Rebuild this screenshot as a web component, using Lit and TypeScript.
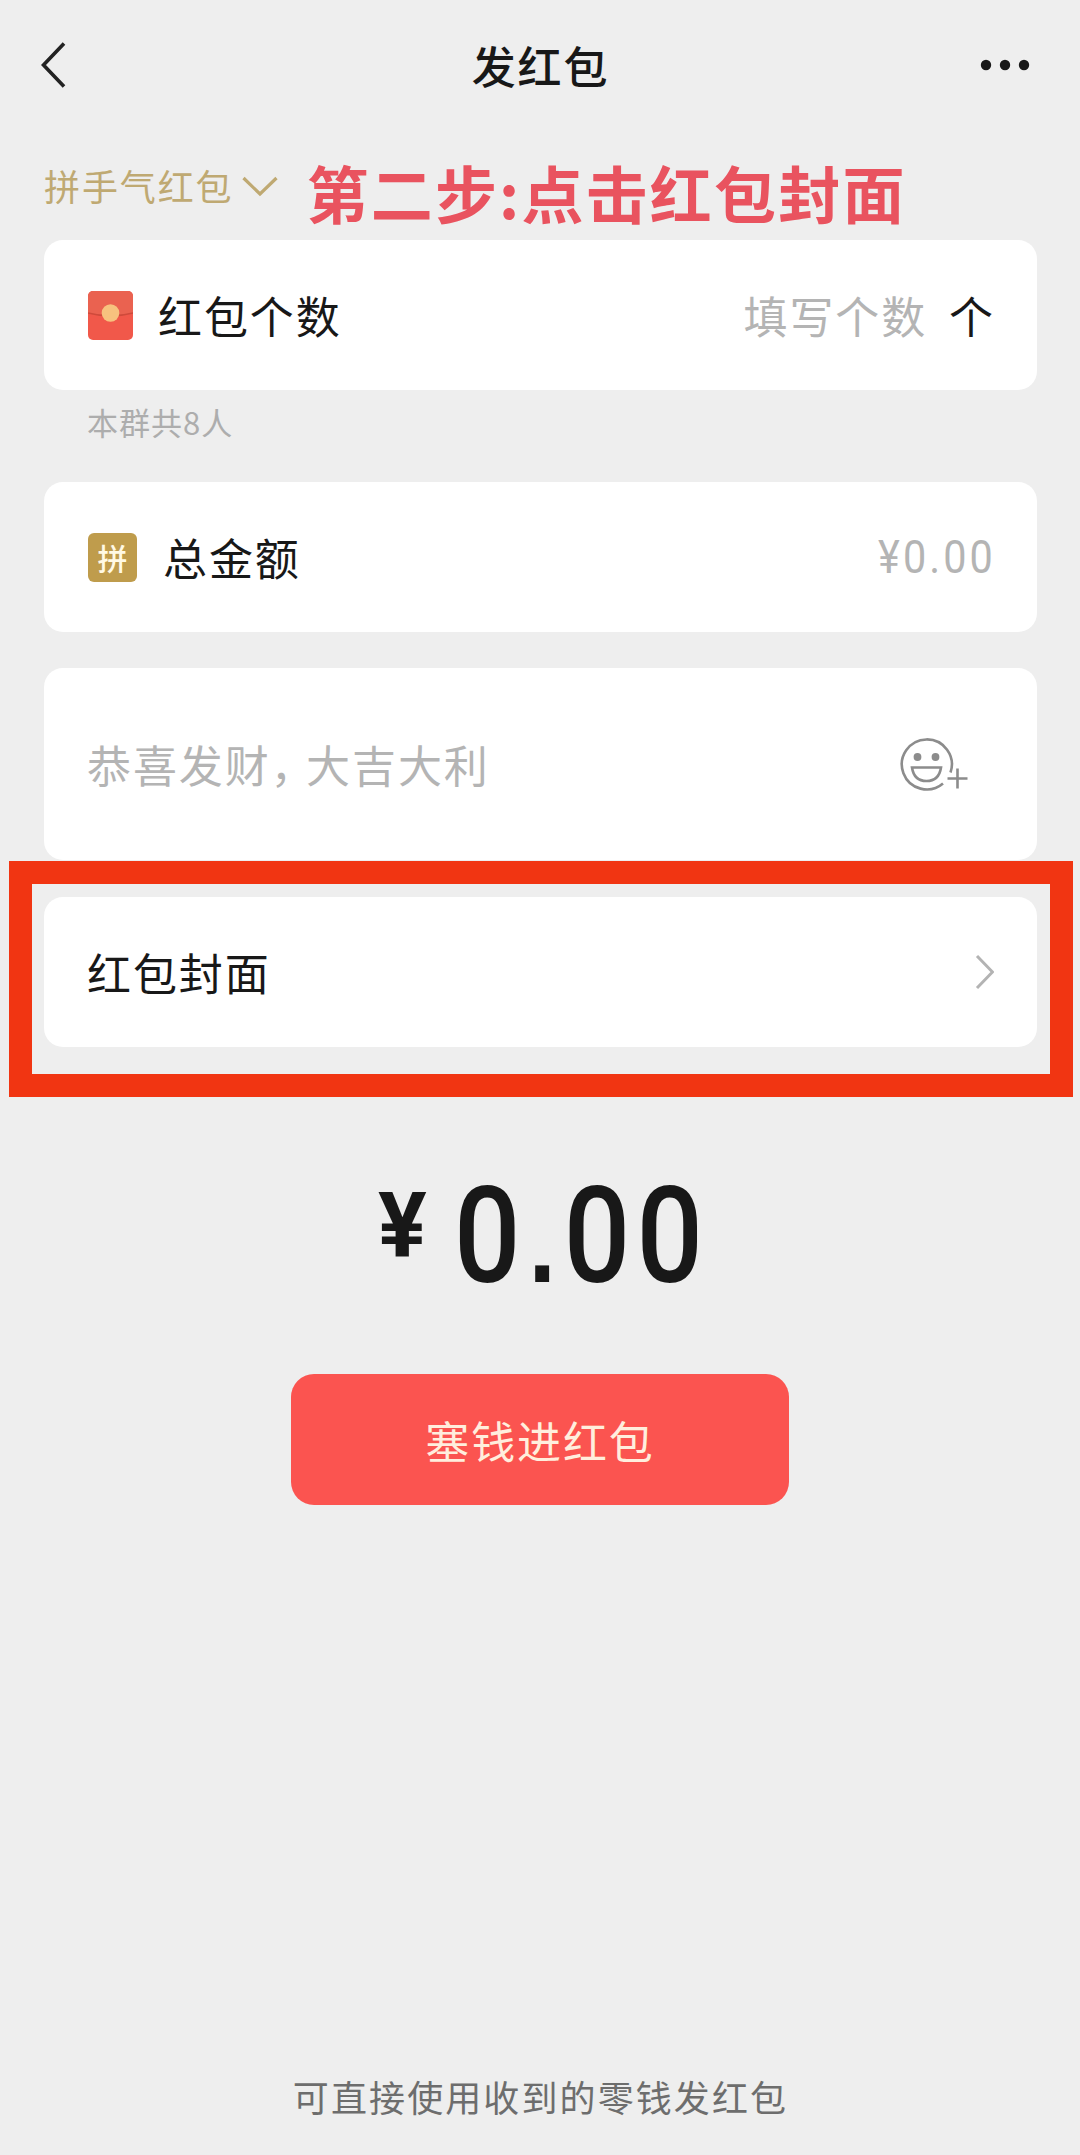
import { LitElement, html, css } from "lit";
import { customElement } from "lit/decorators.js";

@customElement("app-root")
export class AppRoot extends LitElement {
  static styles = css`
    :host {
      display: block;
      font-family: "Noto Sans CJK SC", "Noto Sans", sans-serif;
      color: #181818;
    }
    * { box-sizing: border-box; }
    svg { display: block; flex: none; }
    .page {
      position: relative;
      display: flex;
      flex-direction: column;
      width: 1080px;
      height: 2155px;
      padding: 0 43px 0 44px;
      background: #eeeeee;
      font-size: 44px;
      letter-spacing: 1.9px;
      line-height: 60px;
      white-space: nowrap;
      overflow: hidden;
    }
    .header {
      display: grid;
      grid-template-columns: 1fr auto 1fr;
      align-items: center;
      height: 130px;
      margin: 0 5px 0 -5px;
    }
    .title { font-weight: 500; margin: 0; padding: 0 0 1px 10px; font-size: 44px; }
    .more { justify-self: end; }
    .mode {
      display: flex;
      height: 110px;
      color: #bfa972;
      font-size: 36px;
    }
    .mode-name { padding-top: 25px; }
    .mode-arrow { margin: 45px 0 0 8px; }
    .step {
      margin-left: 29px;
      padding-top: 17px;
      font-size: 62px;
      letter-spacing: 2.2px;
      line-height: 90px;
      font-weight: 700;
      color: #e9535f;
    }
    .card {
      display: flex;
      align-items: center;
      height: 150px;
      flex: none;
      padding: 0 43px 0 44px;
      border-radius: 19px;
      background: #fff;
    }
    .hint { color: #b4b4b4; }
    .push { margin-left: auto; }
    .count { margin-left: 22px; margin-right: -1px; }
    .envelope + .label { margin-left: 25px; }
    .members {
      height: 92px;
      padding: 1px 0 0 43px;
      font-size: 31px;
      letter-spacing: 1px;
      line-height: 62px;
      color: #adadad;
    }
    .tag {
      display: grid;
      place-items: center;
      width: 49px;
      height: 49px;
      margin-right: 26px;
      border-radius: 6px;
      background: #bf9c4c;
      color: #fff9e4;
      font-size: 30px;
      font-weight: 500;
      letter-spacing: 0;
      line-height: 42px;
    }
    .money {
      font-family: Roboto, sans-serif;
      font-weight: 400;
      font-size: 46px;
      letter-spacing: 3.4px;
      color: #b4b4b4;
      margin-right: -2px;
      transform: scaleX(0.9);
      transform-origin: right;
    }
    .wish { height: 192px; margin-top: 36px; padding-left: 43px; }
    .comma { font-feature-settings: "halt" 1; letter-spacing: 13.500px; }
    .emoji { margin-right: 21px; }
    .cover { margin-top: 37px; padding-left: 43px; }
    .highlight {
      position: absolute;
      left: 9px;
      top: 861px;
      width: 1064px;
      height: 236px;
      border: 23px solid #f13512;
    }
    .total {
      display: flex;
      align-items: flex-start;
      height: 327px;
      padding: 123px 0 0 334px;
      font-family: Roboto, sans-serif;
      font-weight: 500;
      letter-spacing: 0;
    }
    .yen {
      width: 76px;
      padding-top: 10px;
      font-size: 91px;
      line-height: 92px;
      font-weight: 700;
    }
    .sum {
      font-size: 133px;
      line-height: 134px;
      letter-spacing: 7px;
      transform: scaleX(0.88);
      transform-origin: left;
    }
    .point {
      font-family: "Liberation Sans", sans-serif;
      font-weight: 700;
      font-size: 112px;
      line-height: 1px;
      margin: 0 2px;
    }
    .pay {
      align-self: center;
      width: 498px;
      height: 131px;
      flex: none;
      margin-right: 1px;
      border: 0;
      padding: 0;
      border-radius: 23px;
      background: #fb5450;
      color: #ffeedd;
      font: inherit;
      letter-spacing: inherit;
    }
    .footer {
      margin: auto 0 29px;
      text-align: center;
      font-size: 36px;
      letter-spacing: 2.1px;
      color: #6d6d6d;
    }
  `;

  render() {
    return html`
      <main class="page">
        <header class="header">
          <svg width="30" height="50" viewBox="0 0 30 50" fill="none" stroke="#222" stroke-width="3.6">
            <path d="M25 3.5 4.5 25 25 46.5" />
          </svg>
          <h1 class="title">发红包</h1>
          <svg class="more" width="54" height="14" viewBox="0 0 54 14" fill="#181818">
            <circle cx="8" cy="7" r="5.2" /><circle cx="27" cy="7" r="5.2" /><circle cx="46" cy="7" r="5.2" />
          </svg>
        </header>

        <div class="mode">
          <span class="mode-name">拼手气红包</span>
          <svg class="mode-arrow" width="36" height="24" viewBox="0 0 36 24" fill="none" stroke="#bfa972" stroke-width="3.2">
            <path d="M1.5 3 18 19 34.500 3" />
          </svg>
          <span class="step">第二步:点击红包封面</span>
        </div>

        <section class="card">
          <svg class="envelope" width="45" height="49" viewBox="0 0 45 49">
            <rect width="45" height="49" rx="5" fill="#f1584a" />
            <path d="M0 22V5a5 5 0 0 1 5-5h35a5 5 0 0 1 5 5v17q-22.500 6-45 0Z" fill="#ea6250" />
            <path d="M0 22q22.500 6 45 0" fill="none" stroke="#cf4a3b" stroke-width="1.6" />
            <circle cx="22.500" cy="22" r="8.800" fill="#f7c27e" />
          </svg>
          <span class="label">红包个数</span>
          <span class="hint push">填写个数</span>
          <span class="count">个</span>
        </section>
        <div class="members">本群共8人</div>

        <section class="card">
          <span class="tag">拼</span>
          <span class="label">总金额</span>
          <span class="money push">¥0.00</span>
        </section>

        <section class="card wish">
          <span class="hint">恭喜发财<span class="comma">，</span>大吉大利</span>
          <svg class="emoji push" width="74" height="60" viewBox="0 0 74 60" fill="none" stroke="#8c8c8c" stroke-width="2.600">
            <path d="M51.500 38.500A25 25 0 1 0 44 49.500" />
            <circle cx="18.500" cy="23" r="3.900" fill="#8c8c8c" stroke="none" />
            <circle cx="36.500" cy="23" r="3.900" fill="#8c8c8c" stroke="none" />
            <path d="M13 33.500H42Q40 47 27.500 47T13 33.500Z" />
            <path d="M48.500 44.500H68.500M58.500 34.500V54.500" />
          </svg>
        </section>

        <section class="card cover">
          <span class="label">红包封面</span>
          <svg class="push" width="19" height="38" viewBox="0 0 19 38" fill="none" stroke="#b3b3b3" stroke-width="3">
            <path d="M2 3 17.500 19 2 35" />
          </svg>
        </section>
        <div class="highlight"></div>

        <div class="total">
          <span class="yen">¥</span>
          <span class="sum">0<span class="point">.</span>00</span>
        </div>
        <button class="pay">塞钱进红包</button>
        <footer class="footer">可直接使用收到的零钱发红包</footer>
      </main>
    `;
  }
}
